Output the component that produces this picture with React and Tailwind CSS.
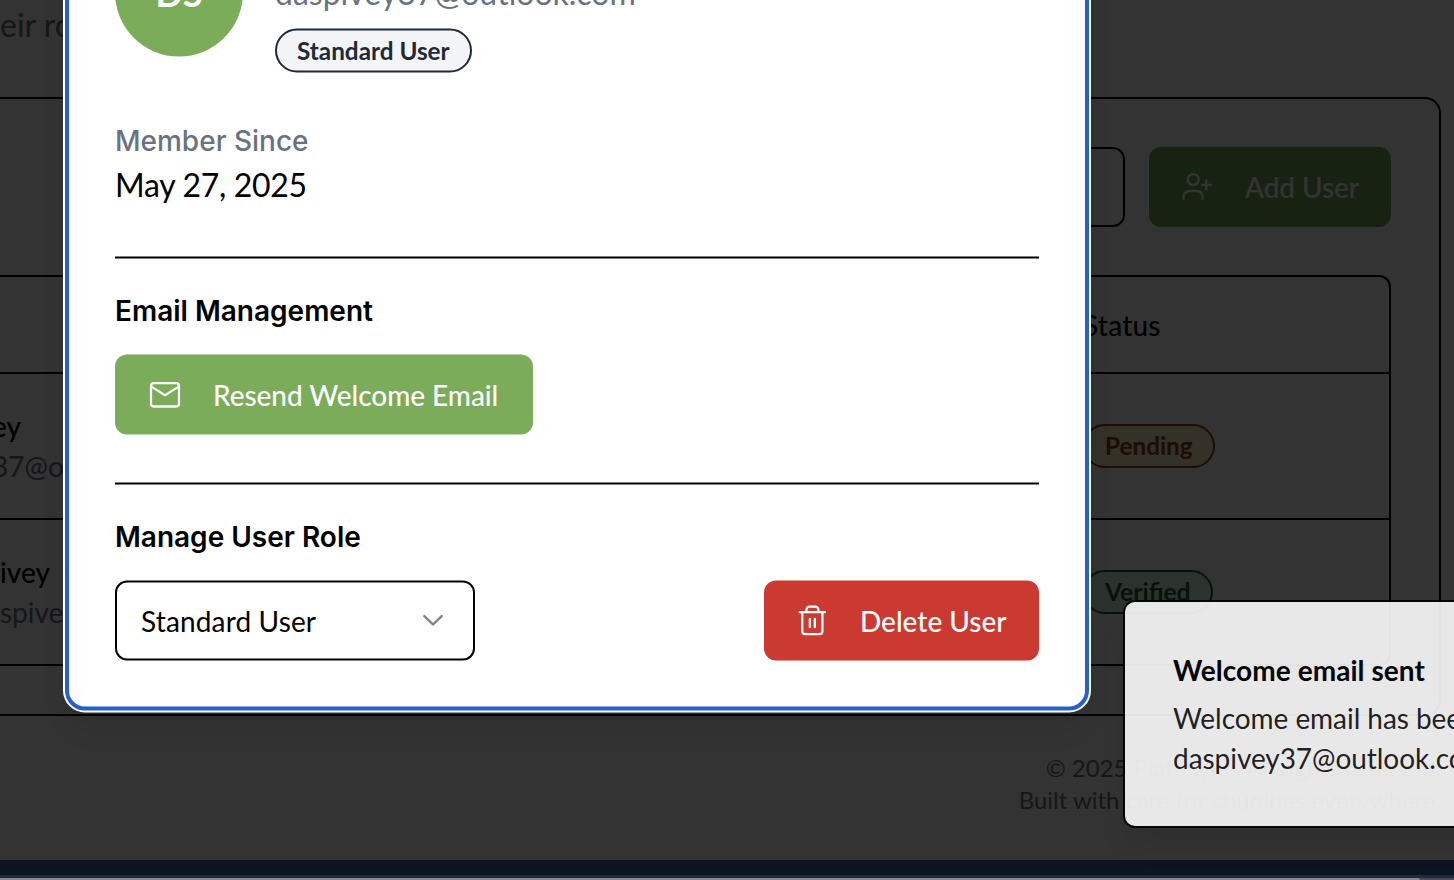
function Svg({ children, className, sw = 1.7 }) {
  return (
    <svg viewBox="0 0 24 24" className={className} fill="none" stroke="currentColor" strokeWidth={sw} strokeLinecap="round" strokeLinejoin="round">
      {children}
    </svg>
  );
}

function Page() {
  return (
    <div className="flex h-[860px] flex-col bg-white">
      <header className="h-[97px] pt-[5px] text-[32px] leading-10 whitespace-nowrap text-gray-500">
        <span>eir roles</span>
      </header>
      <section className="mr-[13px] h-[619px] rounded-r-[16px] border-y-2 border-r-2 border-black pt-12 pr-12">
        <div className="flex h-20 justify-end gap-6">
          <div className="w-[600px] rounded-xl border-2 border-black" />
          <button className="flex w-[242px] items-center rounded-xl bg-[#7aac5a] pl-8 text-[28px] font-medium tracking-[-0.08px] text-white">
            <Svg className="mr-8 h-8 w-8">
              <circle cx="9.2" cy="6.4" r="4.1" />
              <path d="M2 21v-1.8a4.2 4.2 0 0 1 4.2-4.2h5.8a4.2 4.2 0 0 1 4.2 4.2V21M18.9 7.2v6.4M15.6 10.4h6.8" />
            </Svg>
            Add User
          </button>
        </div>
        <div className="mt-12 h-[391px] rounded-r-xl border-y-2 border-r-2 border-black">
          <div className="flex h-[97px] items-center justify-end border-b-2 border-black text-[28px] font-medium tracking-[0.2px]">
            <span className="w-[306px]">Status</span>
          </div>
          <div className="flex h-[146px] items-center justify-between border-b-2 border-black text-[28px] leading-10">
            <div className="whitespace-nowrap">
              <div className="-ml-2 font-medium">ey</div>
              <div className="-ml-2 text-gray-500">37@outlook.com</div>
            </div>
            <div className="flex w-[306px]">
              <span className="h-11 rounded-full border-2 border-[#92400e] bg-[#fef3c7] px-5 text-[24.3px] leading-10 font-bold text-[#92400e]">Pending</span>
            </div>
          </div>
          <div className="flex h-[144px] items-center justify-between text-[28px] leading-10">
            <div className="whitespace-nowrap">
              <div className="font-medium">ivey</div>
              <div className="text-gray-500">spivey@outlook.com</div>
            </div>
            <div className="flex w-[306px]">
              <span className="h-11 rounded-full border-2 border-[#166534] bg-[#dcfce7] px-5 text-[24.6px] leading-10 font-bold text-[#166534]">Verified</span>
            </div>
          </div>
        </div>
      </section>
      <footer className="mt-9 pr-[13px] text-right text-2xl leading-8 tracking-[-0.04px] text-gray-500">
        <p>© 2025 PlateSync. All rights reserved.</p>
        <p>Built with care for churches everywhere.</p>
      </footer>
    </div>
  );
}

function Dialog() {
  return (
    <div className="absolute -top-[104px] left-[65px] flex h-[814px] w-[1024px] translate-y-[0.5px] flex-col rounded-b-[20px] border-4 border-[#285fc9] bg-white px-[46px] shadow-[0_0_0_2px_white,0_20px_30px_-6px_rgba(0,0,0,0.1)]">
      <div className="mt-[28px] flex h-32 gap-8">
        <div className="flex h-32 w-32 items-center justify-center rounded-full bg-[#7aac5a] text-[36px] font-bold text-white">DS</div>
        <div className="flex flex-col items-start pt-11">
          <div className="h-10 shrink-0 text-[32px] leading-10 text-gray-500">daspivey37@outlook.com</div>
          <span className="mt-4 h-11 shrink-0 rounded-full border-2 border-gray-800 bg-gray-100 px-5 text-[24.3px] leading-10 font-bold text-gray-800">Standard User</span>
        </div>
      </div>
      <div className="mt-16 font-[Inter] text-[28px] leading-10 font-medium text-gray-500">Member Since</div>
      <div className="mt-1 h-12 text-[32px] leading-10 tracking-[-0.3px]">May 27, 2025</div>
      <div className="mt-11 border-t-2 border-black" />
      <h3 className="mt-8 font-[Inter] text-[28px] leading-10 font-semibold">Email Management</h3>
      <button className="mt-6 flex h-20 w-[418px] items-center rounded-xl bg-[#7aac5a] pl-[34px] text-[28px] font-medium tracking-[-0.05px] text-white">
        <Svg className="mr-8 h-8 w-8">
          <rect x="1.5" y="3.5" width="21" height="17.5" rx="2" />
          <path d="m2 6.3 10 6.2 10-6.2" />
        </Svg>
        Resend Welcome Email
      </button>
      <div className="mt-12 border-t-2 border-black" />
      <h3 className="mt-8 font-[Inter] text-[28px] leading-10 font-semibold">Manage User Role</h3>
      <div className="mt-6 flex h-20 justify-between">
        <div className="flex w-[360px] items-center justify-between rounded-xl border-2 border-black px-6 text-[28px] tracking-[0.15px]">
          <span>Standard User</span>
          <Svg className="h-8 w-8 text-[#808080]" sw={1.8}>
            <path d="m5.5 8.7 6.5 6.3 6.5-6.3" />
          </Svg>
        </div>
        <button className="flex w-[275px] items-center rounded-xl bg-[#ca3a31] pl-8 text-[28px] font-medium text-white">
          <Svg className="mr-8 h-8 w-8">
            <path d="M2.8 5.8h18.9M19.8 6v14a2.2 2.2 0 0 1-2.2 2.2H6.9A2.2 2.2 0 0 1 4.7 20V6M7.8 5.6V4a2.4 2.4 0 0 1 2.4-2.4h4.2A2.4 2.4 0 0 1 16.8 4v1.6M10.4 10.8v6.2M14.1 10.8v6.2" />
          </Svg>
          Delete User
        </button>
      </div>
    </div>
  );
}

export default function App() {
  return (
    <div className="relative h-[880px] w-[1454px] overflow-hidden bg-[#0d1320] font-[Lato,sans-serif] text-black">
      <Page />
      <div className="h-[15px] bg-[#0d1320]" />
      <div className="h-[3px] bg-[#242838]" />
      <div className="h-[2px] bg-[#484a5c]">
        <div className="h-[2px] w-[1420px] rounded-tr-full bg-[#868690]" />
      </div>
      <div className="absolute inset-x-0 top-0 h-[860px] bg-black/80" />
      <Dialog />
      <div className="absolute top-[600px] left-[1123px] h-[228px] w-[500px] rounded-xl border-2 border-black bg-white px-12 pt-12 text-[28px] opacity-[0.89] shadow-[0_20px_30px_-6px_rgba(0,0,0,0.1)]">
        <div className="leading-10 font-bold tracking-[0.06px]">Welcome email sent</div>
        <div className="mt-2 leading-10 tracking-[-0.05px] whitespace-nowrap text-black/90">
          Welcome email has been sent to
          <br />
          daspivey37@outlook.com
        </div>
      </div>
    </div>
  );
}
